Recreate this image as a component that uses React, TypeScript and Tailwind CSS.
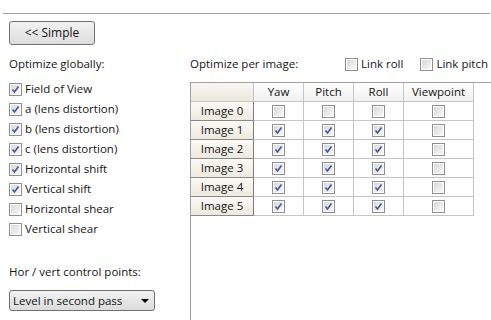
import React from "react";

function Box({ checked }: { checked?: boolean }) {
  return (
    <svg width="13" height="13" viewBox="0 0 13 13" className="shrink-0 block">
      <defs>
        <linearGradient id="cbg" x1="0" y1="0" x2="1" y2="1">
          <stop offset="0" stopColor="#d9d9d9" />
          <stop offset="1" stopColor="#f7f7f7" />
        </linearGradient>
      </defs>
      <rect x="0.5" y="0.5" width="12" height="12" fill="#fff" stroke="#8f8f8f" />
      <rect x="2" y="2" width="9" height="9" fill="url(#cbg)" />
      {checked && (
        <path d="M3.5 6.5 L5.5 9 L9.5 3.5" fill="none" stroke="#44579a" strokeWidth="1.6" />
      )}
    </svg>
  );
}

const globals: [string, boolean][] = [
  ["Field of View", true],
  ["a (lens distortion)", true],
  ["b (lens distortion)", true],
  ["c (lens distortion)", true],
  ["Horizontal shift", true],
  ["Vertical shift", true],
  ["Horizontal shear", false],
  ["Vertical shear", false],
];

const cols = [
  { name: "Yaw", w: "w-[50px]" },
  { name: "Pitch", w: "w-[50px]" },
  { name: "Roll", w: "w-[50px]" },
  { name: "Viewpoint", w: "w-[70px]" },
];

export default function App() {
  return (
    <div
      className="w-[491px] h-[320px] overflow-hidden bg-white text-[11.5px] text-[#141414]"
      style={{ fontFamily: '"Open Sans", "Noto Sans", sans-serif' }}
    >
      <div className="pt-[13px] pl-[3px] pr-[1px]">
        <div className="h-px bg-[#a0a0a0]" />
      </div>
      <div className="pl-[9px] pt-[7px]">
        <button className="w-[86px] h-[24px] rounded-[3px] border border-[#707070] bg-gradient-to-b from-[#f2f2f2] to-[#dddddd] leading-none text-[12px]">
          &lt;&lt; Simple
        </button>
      </div>

      <div className="flex mt-[11px]">
        {/* left column */}
        <div className="w-[181px] pl-[9px] shrink-0">
          <div className="h-[16px] leading-[16px]">Optimize globally:</div>
          <div className="mt-[7px]">
            {globals.map(([label, on]) => (
              <div key={label} className="h-[20px] flex items-center gap-[3px]">
                <Box checked={on} />
                <span className="leading-[16px]">{label}</span>
              </div>
            ))}
          </div>
          <div className="mt-[25px] h-[16px] leading-[16px]">Hor / vert control points:</div>
          <div className="mt-[10px] w-[146px] h-[21px] rounded-[3px] border border-[#707070] bg-gradient-to-b from-[#f2f2f2] to-[#dcdcdc] flex items-center justify-between pl-[3px] pr-[5px]">
            <span className="leading-none">Level in second pass</span>
            <span className="w-0 h-0 border-l-[4px] border-r-[4px] border-t-[4px] border-l-transparent border-r-transparent border-t-black" />
          </div>
        </div>

        {/* right column */}
        <div className="flex-1 pl-[9px]">
          <div className="h-[16px] flex items-center">
            <span className="leading-[16px]">Optimize per image:</span>
            <div className="ml-auto flex items-center gap-[3px] mr-[3px]">
              <Box />
              <span className="leading-[16px]">Link roll</span>
              <span className="w-[11px]" />
              <Box />
              <span className="leading-[16px]">Link pitch</span>
            </div>
          </div>
          <div className="mt-[10px] h-[300px] border-l border-t border-[#a0a0a0]">
            <div className="flex h-[19px]">
              <div className="w-[63px] border-r border-b border-[#c4c4c4] bg-gradient-to-b from-[#f7f6f0] to-[#ece9de]" />
              {cols.map((c) => (
                <div
                  key={c.name}
                  className={`${c.w} border-r border-b border-[#c4c4c4] bg-gradient-to-b from-white to-[#f1f1f1] flex items-center justify-center`}
                >
                  {c.name}
                </div>
              ))}
            </div>
            {[0, 1, 2, 3, 4, 5].map((i) => (
              <div key={i} className="flex h-[19px]">
                <div className="w-[63px] border-r border-b border-r-[#7c7c7c] border-b-[#8a8a8a] bg-gradient-to-b from-[#fbfaf5] to-[#ece9de] flex items-center justify-center">
                  Image {i}
                </div>
                {cols.map((c, j) => (
                  <div
                    key={c.name}
                    className={`${c.w} border-r border-b border-[#c4c4c4] flex items-center justify-center`}
                  >
                    <Box checked={i > 0 && j < 3} />
                  </div>
                ))}
              </div>
            ))}
          </div>
        </div>
      </div>
    </div>
  );
}
